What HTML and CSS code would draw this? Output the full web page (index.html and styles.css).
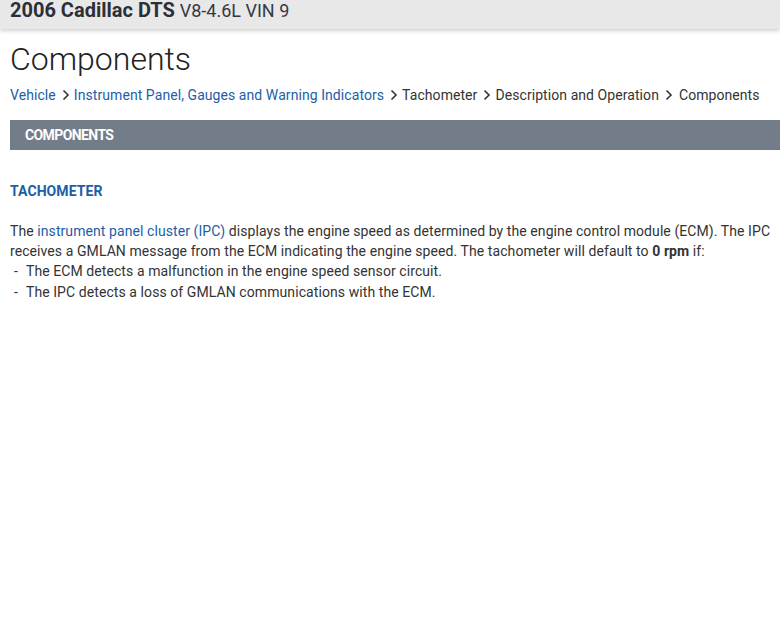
FILE: index.html
```html
<!DOCTYPE html>
<html>
<head>
<meta charset="utf-8">
<link rel="stylesheet" href="styles.css">
</head>
<body>
<header class="topbar">
  <span class="model">2006 Cadillac DTS</span><span class="engine">V8-4.6L VIN 9</span>
</header>
<main class="content">
  <h1 class="page-title">Components</h1>
  <nav class="crumbs">
    <a class="crumb link">Vehicle</a>
    <span class="sep"><svg width="8" height="12" viewBox="0 0 8 12"><path d="M1.5 1.5 L6 6 L1.5 10.5" fill="none" stroke="#333" stroke-width="1.6"/></svg></span>
    <a class="crumb link">Instrument Panel, Gauges and Warning Indicators</a>
    <span class="sep"><svg width="8" height="12" viewBox="0 0 8 12"><path d="M1.5 1.5 L6 6 L1.5 10.5" fill="none" stroke="#333" stroke-width="1.6"/></svg></span>
    <span class="crumb">Tachometer</span>
    <span class="sep"><svg width="8" height="12" viewBox="0 0 8 12"><path d="M1.5 1.5 L6 6 L1.5 10.5" fill="none" stroke="#333" stroke-width="1.6"/></svg></span>
    <span class="crumb">Description and Operation</span>
    <span class="sep wide"><svg width="8" height="12" viewBox="0 0 8 12"><path d="M1.5 1.5 L6 6 L1.5 10.5" fill="none" stroke="#333" stroke-width="1.6"/></svg></span>
    <span class="crumb">Components</span>
  </nav>
  <div class="section-bar">COMPONENTS</div>
  <h2 class="sub">TACHOMETER</h2>
  <p class="body">The <a class="link">instrument panel cluster (IPC)</a> displays the engine speed as determined by the engine control module (ECM). The IPC receives a GMLAN message from the ECM indicating the engine speed. The tachometer will default to <b>0 rpm</b> if:</p>
  <ul class="dash">
    <li>The ECM detects a malfunction in the engine speed sensor circuit.</li>
    <li>The IPC detects a loss of GMLAN communications with the ECM.</li>
  </ul>
</main>
</body>
</html>
```
FILE: styles.css
```css
html, body {
  margin: 0;
  padding: 0;
  background: #fff;
  font-family: Roboto, "Liberation Sans", sans-serif;
  color: #333;
}
.topbar {
  height: 29px;
  box-sizing: border-box;
  background: #e8e8e9;
  box-shadow: 0 2px 4px rgba(0,0,0,0.18);
  padding: 1px 10px 0;
  display: flex;
  align-items: baseline;
  gap: 5px;
  white-space: nowrap;
  color: #2b2f36;
}
.model {
  font-size: 20px;
  line-height: 18px;
  font-weight: 700;
}
.engine {
  font-size: 18px;
  line-height: 18px;
  font-weight: 400;
  color: #353a42;
}
.content {
  padding: 0 0 0 10px;
  letter-spacing: 0.08px;
}
.page-title {
  font-size: 32px;
  font-weight: 300;
  margin: 10px 0 0 0;
  line-height: 40px;
  color: #222;
  letter-spacing: 0;
}
.crumbs {
  display: flex;
  align-items: center;
  font-size: 14px;
  line-height: 20px;
  margin-top: 6px;
  white-space: nowrap;
  letter-spacing: 0.07px;
}
.link {
  color: #1d5ea6;
  text-decoration: none;
}
.crumb { color: #333; }
.crumb.link { color: #1d5ea6; }
.sep {
  display: flex;
  align-items: center;
  padding: 0 4px 0 6px;
}
.sep.wide { padding-right: 6px; }
.section-bar {
  margin-top: 15px;
  height: 30px;
  background: #737d8a;
  color: #fff;
  font-weight: 700;
  font-size: 14px;
  letter-spacing: -0.6px;
  display: flex;
  align-items: center;
  padding-left: 15px;
}
.sub {
  font-size: 14px;
  font-weight: 700;
  color: #1d5ea6;
  margin: 31px 0 0 0;
  line-height: 20px;
}
.body {
  font-size: 14px;
  line-height: 20px;
  margin: 20px 0 0 0;
  padding-right: 8px;
}
.dash {
  list-style: none;
  margin: 0;
  padding: 0;
  font-size: 14px;
  line-height: 20.5px;
}
.dash li {
  display: flex;
  gap: 8px;
  padding-left: 4px;
}
.dash li::before {
  content: "-";
}
```
